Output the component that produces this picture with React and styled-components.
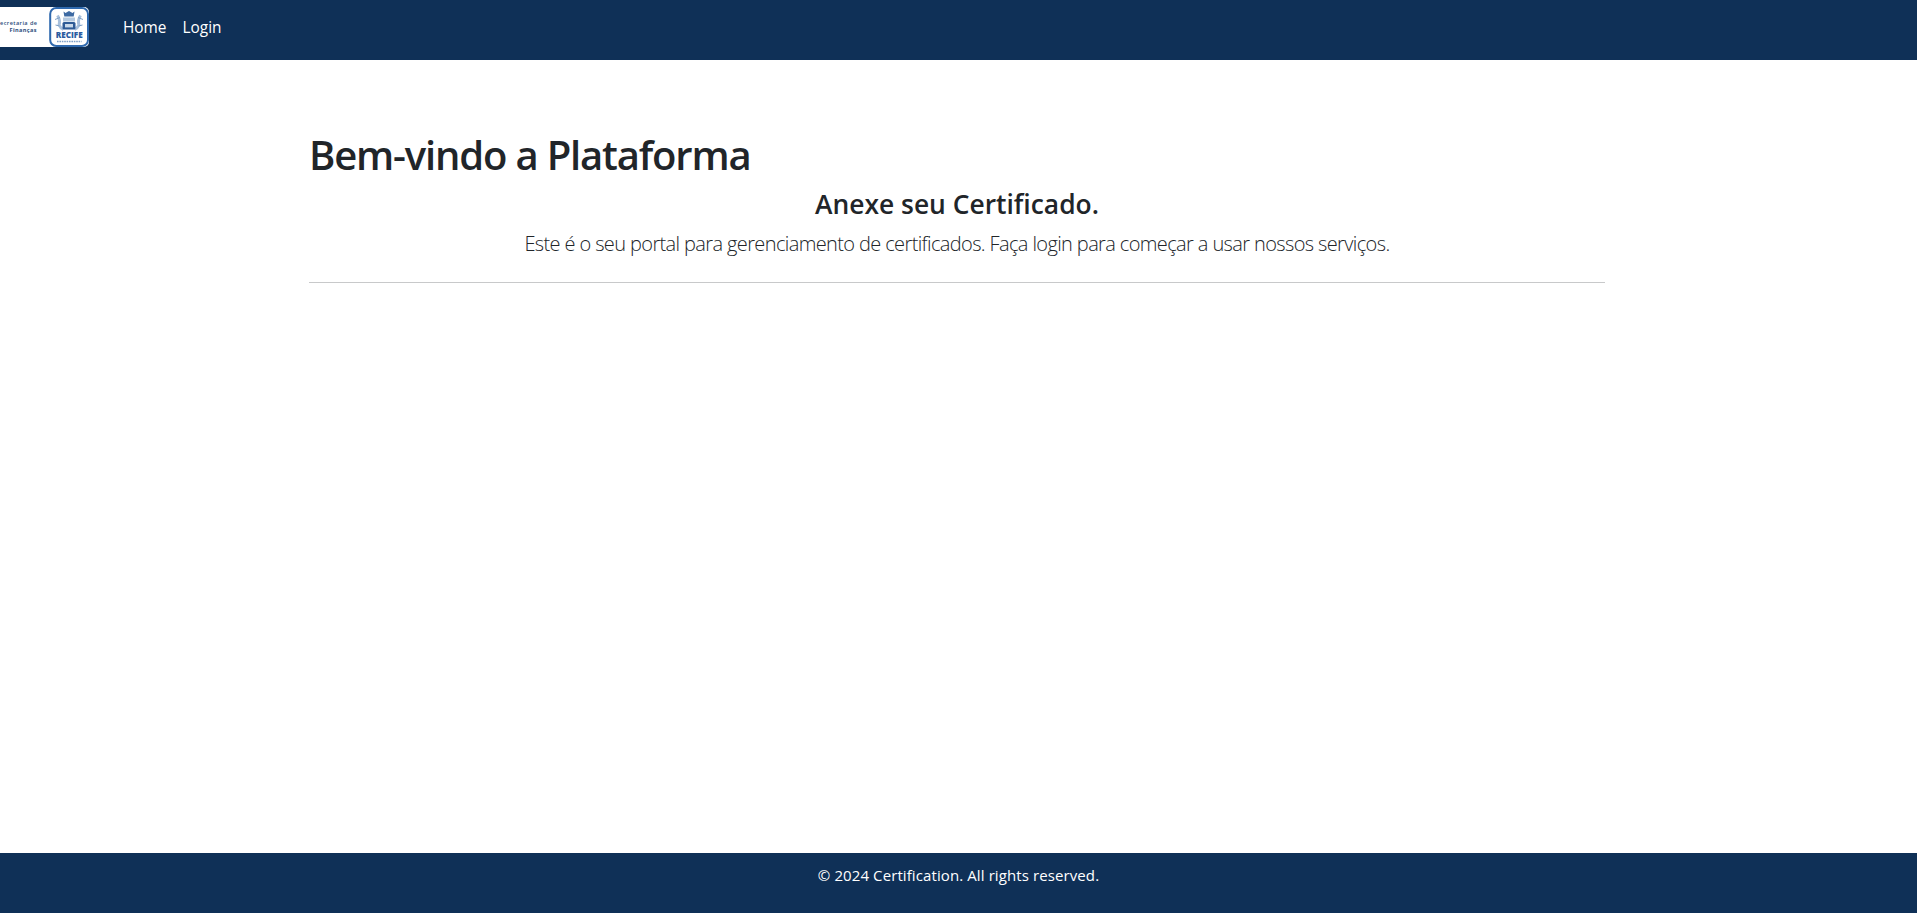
import React from 'react';
import styled, { createGlobalStyle } from 'styled-components';

const GlobalStyle = createGlobalStyle`
  * {
    box-sizing: border-box;
  }
  html,
  body {
    margin: 0;
    background-color: #fff;
  }
  body {
    font-family: 'Open Sans', 'Noto Sans', sans-serif;
    color: #212529;
  }
`;

const Page = styled.div`
  display: flex;
  flex-direction: column;
  min-height: 913px;
`;

const Navbar = styled.nav`
  display: flex;
  align-items: center;
  height: 60px;
  background-color: #0f3057;
`;

const NavLinks = styled.div`
  display: flex;
  gap: 16px;
  margin-left: 33px;
  margin-top: -4px;
`;

const NavLink = styled.a`
  font-size: 15.4px;
  line-height: 24px;
  color: #fff;
  text-decoration: none;
`;

const Logo = styled.svg`
  display: block;
  flex-shrink: 0;
  margin-top: -6px;
`;

const Main = styled.main`
  flex: 1;
  width: 1296px;
  margin-left: 309px;
  padding-top: 71px;
`;

const Heading = styled.h1`
  margin: 0;
  font-size: 40px;
  line-height: 48px;
  font-weight: 600;
  letter-spacing: -1.17px;
`;

const SubHeading = styled.h2`
  margin: 0;
  padding-top: 9px;
  font-size: 26.4px;
  line-height: 32px;
  font-weight: 600;
  text-align: center;
`;

const Lead = styled.p`
  margin: 9px 0 0;
  font-size: 20px;
  line-height: 30px;
  font-weight: 300;
  letter-spacing: -0.62px;
  text-align: center;
`;

const Rule = styled.hr`
  margin: 23px 0 0;
  border: 0;
  border-top: 1px solid #c8c9ca;
`;

const Footer = styled.footer`
  height: 60px;
  padding-top: 10px;
  background-color: #0f3057;
  color: #fff;
  font-size: 15px;
  line-height: 24px;
  letter-spacing: 0.1px;
  text-align: center;
`;

function RecifeLogo() {
  return (
    <Logo width="90" height="42" viewBox="0 0 90 42">
      <path d="M0 1h84a5 5 0 0 1 5 5v30a5 5 0 0 1-5 5H0z" fill="#fff" />
      <text x="0" y="19" fontSize="5.6" fontWeight="600" fill="#2b4d7c" fontFamily="Open Sans, sans-serif" textLength="37">
        ecretaria de
      </text>
      <text x="9.5" y="25.6" fontSize="5.6" fontWeight="700" fill="#2b4d7c" fontFamily="Open Sans, sans-serif" textLength="27">
        Finanças
      </text>
      <rect x="50.2" y="2" width="37.8" height="38" rx="6" fill="#fff" stroke="#2f69ae" strokeWidth="2" />
      {/* crown */}
      <path d="M63.5 5.5l2 1.5 3.5-2 3.5 2 2-1.5-.8 5h-9.4z" fill="#3d6aa3" />
      {/* supporters either side of the shield */}
      <path d="M57.5 9.5c2 3 2.6 6 1.6 9.5 1 2.5 2.4 3.5 4.4 4.5M80.5 9.5c-2 3-2.6 6-1.6 9.5-1 2.5-2.4 3.5-4.4 4.5" fill="none" stroke="#a8c0dc" strokeWidth="3" />
      <path d="M55 13.5l5-2M83 13.5l-5-2M55.5 19l4 1M82.5 19l-4 1" stroke="#7fa0c6" strokeWidth="1" />
      {/* shield */}
      <rect x="63" y="11.5" width="12" height="4" fill="#b4c9e0" />
      <rect x="62.5" y="16" width="13" height="7.5" rx="1.5" fill="#2e5b96" />
      <rect x="65" y="18" width="8" height="3.4" fill="#c9d9ea" />
      <text x="69.2" y="32" textAnchor="middle" fontSize="8.6" fontWeight="800" fill="#2a5c9f" fontFamily="Open Sans, sans-serif" textLength="27" lengthAdjust="spacingAndGlyphs">
        RECIFE
      </text>
      <path d="M57 35.5h24.5" stroke="#7d9ec6" strokeWidth="1.6" strokeDasharray="1.6 .8" />
    </Logo>
  );
}

function App() {
  return (
    <Page>
      <GlobalStyle />
      <Navbar>
        <RecifeLogo />
        <NavLinks>
          <NavLink href="#home">Home</NavLink>
          <NavLink href="#login">Login</NavLink>
        </NavLinks>
      </Navbar>
      <Main>
        <Heading>Bem-vindo a Plataforma</Heading>
        <SubHeading>Anexe seu Certificado.</SubHeading>
        <Lead>Este é o seu portal para gerenciamento de certificados. Faça login para começar a usar nossos serviços.</Lead>
        <Rule />
      </Main>
      <Footer>© 2024 Certification. All rights reserved.</Footer>
    </Page>
  );
}

export default App;
